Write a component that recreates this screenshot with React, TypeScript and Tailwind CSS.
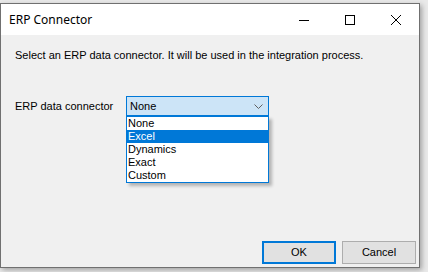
import React from 'react';

const items = ['None', 'Excel', 'Dynamics', 'Exact', 'Custom'];

const CaptionButtons: React.FC = () => (
    <div className="flex h-full">
        <div className="w-[46px] flex items-center justify-center">
            <svg width="10" height="10" viewBox="0 0 10 10">
                <path d="M0 5.5H10" stroke="#000" strokeWidth="1" />
            </svg>
        </div>
        <div className="w-[46px] flex items-center justify-center">
            <svg width="10" height="10" viewBox="0 0 10 10">
                <rect x="0.5" y="0.5" width="9" height="9" fill="none" stroke="#000" strokeWidth="1" />
            </svg>
        </div>
        <div className="w-[46px] flex items-center justify-center">
            <svg width="10" height="10" viewBox="0 0 10 10">
                <path d="M0 0L10 10M10 0L0 10" stroke="#000" strokeWidth="1" />
            </svg>
        </div>
    </div>
);

export default function App() {
    return (
        <div className="w-[428px] h-[272px] bg-[#e9e9e9] pt-[3px] overflow-hidden">
            <div className="w-[420px] h-[265px] border border-[#707070] bg-[#f0f0f0] flex flex-col shadow-[2px_2px_5px_rgba(0,0,0,0.3)] font-['Liberation_Sans',Arial,sans-serif] text-[11px] text-black">
                <div className="h-[31px] bg-white flex items-center justify-between">
                    <span className="pl-[8px] text-[12px] font-['Noto_Sans',sans-serif]">ERP Connector</span>
                    <CaptionButtons />
                </div>
                <div className="flex-1 flex flex-col px-[14px] pt-[14px]">
                    <p className="leading-[13px]">Select an ERP data connector. It will be used in the integration process.</p>
                    <div className="flex items-center mt-[34px]">
                        <span className="w-[111px] leading-[13px]">ERP data connector</span>
                        <div className="relative">
                            <div className="w-[143px] h-[20px] border border-[#0078d7] bg-[#cce4f7] flex items-center justify-between pl-[3px] pr-[5px]">
                                <span>None</span>
                                <svg width="9" height="5" viewBox="0 0 9 5">
                                    <path d="M0.5 0.5L4.5 4.5L8.5 0.5" fill="none" stroke="#606060" strokeWidth="1" />
                                </svg>
                            </div>
                            <ul className="absolute left-0 top-[20px] w-[143px] border border-[#0078d7] bg-white shadow-[3px_3px_3px_rgba(0,0,0,0.25)]">
                                {items.map(item => (
                                    <li
                                        key={item}
                                        className={
                                            item === 'Excel'
                                                ? 'h-[13px] leading-[13px] pl-[1px] bg-[#0078d7] text-white'
                                                : 'h-[13px] leading-[13px] pl-[1px]'
                                        }
                                    >
                                        {item}
                                    </li>
                                ))}
                            </ul>
                        </div>
                    </div>
                    <div className="mt-auto flex justify-end gap-[6px] mb-[3px] -mr-[11px]">
                        <button className="w-[74px] h-[23px] border-2 border-[#0078d7] bg-[#e1e1e1]">OK</button>
                        <button className="w-[74px] h-[23px] border border-[#adadad] bg-[#e1e1e1]">Cancel</button>
                    </div>
                </div>
            </div>
        </div>
    );
}
